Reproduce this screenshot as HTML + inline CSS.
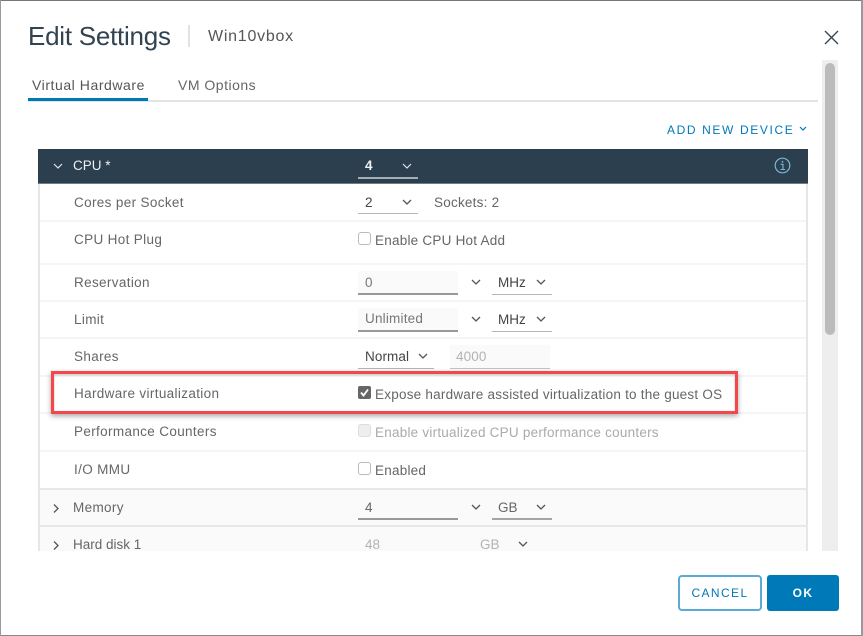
<!DOCTYPE html>
<html><head><meta charset="utf-8">
<style>
html,body{margin:0;padding:0;background:#fff}
#p{position:relative;width:863px;height:636px;overflow:hidden;background:#fff;font-family:"Liberation Sans",sans-serif;font-size:13.5px;color:#666}
#p div,#p span,#p svg{position:absolute}
.t{white-space:nowrap;line-height:16px}
.l{letter-spacing:.35px}
.r{letter-spacing:.23px}
.d{color:#444}
.c{fill:none;stroke:#555;stroke-width:1.3}
.cb{width:11px;height:11px;border:1px solid #bbb;border-radius:3px;background:#fff}
</style></head><body><div id="p">
<div style="left:0;top:0;width:863px;height:1px;background:#777"></div>
<div style="left:0;top:635px;width:863px;height:1px;background:#888"></div>
<div style="left:0;top:0;width:1px;height:636px;background:#999"></div>
<div style="left:861px;top:0;width:2px;height:636px;background:#999"></div>

<span class="t" style="left:28px;top:21px;font-size:26px;line-height:30px;color:#314351;letter-spacing:-.25px">Edit Settings</span>
<div style="left:188px;top:25px;width:2px;height:22px;background:#e2e2e2"></div>
<span class="t" style="left:208px;top:28px;font-size:16px;line-height:18px;color:#565656;letter-spacing:.75px">Win10vbox</span>
<svg style="left:823px;top:29px" width="16" height="16"><path d="M2 2L15 15M15 2L2 15" stroke="#314351" stroke-width="1.3" fill="none"/></svg>

<div style="left:28px;top:100px;width:790px;height:2px;background:#e4e4e4"></div>
<div style="left:28px;top:98px;width:120px;height:3px;background:#0079b8"></div>
<span class="t" style="left:32px;top:77px;font-size:14px;color:#565656;letter-spacing:.56px">Virtual Hardware</span>
<span class="t" style="left:178px;top:77px;font-size:14px;color:#666;letter-spacing:.5px">VM Options</span>

<span class="t" style="left:667px;top:122px;font-size:12px;color:#0079b8;letter-spacing:1.62px">ADD NEW DEVICE</span>
<svg style="left:799px;top:126px" width="8" height="6"><path d="M1 1L4 4L7 1" fill="none" stroke="#0079b8" stroke-width="1.2"/></svg>

<!-- scrollbar -->
<div style="left:822px;top:60px;width:16px;height:491px;background:#eee"></div>
<div style="left:825px;top:63px;width:10px;height:272px;background:#bbb;border-radius:5px"></div>

<!-- table -->
<div style="left:38px;top:149px;width:770px;height:402px;overflow:hidden">
  <div style="left:0;top:0;width:2px;height:402px;background:#e6e6e6"></div>
  <div style="left:768px;top:0;width:2px;height:402px;background:#e6e6e6"></div>
  <div style="left:2px;top:341px;width:766px;height:61px;background:#fafafa"></div>
  <div style="left:2px;top:71px;width:766px;height:2px;background:#f5f5f5"></div>
  <div style="left:2px;top:114px;width:766px;height:2px;background:#f5f5f5"></div>
  <div style="left:2px;top:151px;width:766px;height:2px;background:#f5f5f5"></div>
  <div style="left:2px;top:188px;width:766px;height:2px;background:#f5f5f5"></div>
  <div style="left:2px;top:226px;width:766px;height:2px;background:#f5f5f5"></div>
  <div style="left:2px;top:263px;width:766px;height:2px;background:#f5f5f5"></div>
  <div style="left:2px;top:301px;width:766px;height:2px;background:#f5f5f5"></div>
  <div style="left:0;top:339px;width:770px;height:2px;background:#e8e8e8"></div>
  <div style="left:0;top:376px;width:770px;height:2px;background:#e8e8e8"></div>
  <div style="left:0;top:0;width:770px;height:35px;background:#2b3f4e;border-bottom:1px solid #6f7d87;box-sizing:border-box"></div>
</div>

<svg style="left:53px;top:163px" width="10" height="7"><path d="M1 1L5 5L9 1" fill="none" stroke="#dfe4e8" stroke-width="1.2"/></svg>
<span class="t" style="left:73px;top:158px;color:#eef1f3">CPU *</span>
<span class="t" style="left:365px;top:158px;color:#eef1f3;font-weight:bold">4</span>
<svg style="left:402px;top:163px" width="10" height="7"><path d="M1 1L5 5L9 1" fill="none" stroke="#dfe4e8" stroke-width="1.2"/></svg>
<div style="left:358px;top:177px;width:60px;height:2px;background:#a8adb1"></div>
<svg style="left:774px;top:157px" width="17" height="17"><circle cx="8.5" cy="8.5" r="7.3" fill="none" stroke="#7cb6d6" stroke-width="1.2"/><path d="M6.5 7.3H9V12.5M6.5 12.5H11" fill="none" stroke="#7cb6d6" stroke-width="1.1"/><circle cx="8.5" cy="4.8" r=".9" fill="#7cb6d6"/></svg>

<span class="t l" style="left:74px;top:195px">Cores per Socket</span>
<span class="t d" style="left:365px;top:195px">2</span>
<svg class="c" style="left:402px;top:199px" width="10" height="7"><path d="M1 1L5 5L9 1"/></svg>
<div style="left:358px;top:213px;width:60px;height:1px;background:#b5b5b5"></div>
<span class="t r" style="left:434px;top:195px">Sockets: 2</span>

<span class="t l" style="left:74px;top:232px">CPU Hot Plug</span>
<div class="cb" style="left:358px;top:232px"></div>
<span class="t r" style="left:375px;top:233px">Enable CPU Hot Add</span>

<span class="t l" style="left:74px;top:275px">Reservation</span>
<div style="left:358px;top:271px;width:100px;height:22px;background:#fafafa;border-bottom:2px solid #999"></div>
<span class="t" style="left:365px;top:275px;color:#777">0</span>
<svg class="c" style="left:471px;top:279px" width="10" height="7"><path d="M1 1L5 5L9 1"/></svg>
<span class="t d" style="left:498px;top:275px">MHz</span>
<svg class="c" style="left:536px;top:279px" width="10" height="7"><path d="M1 1L5 5L9 1"/></svg>
<div style="left:492px;top:294px;width:60px;height:1px;background:#b5b5b5"></div>

<span class="t l" style="left:74px;top:312px">Limit</span>
<div style="left:358px;top:308px;width:100px;height:22px;background:#fafafa;border-bottom:2px solid #999"></div>
<span class="t" style="left:365px;top:311px;color:#777;letter-spacing:.2px">Unlimited</span>
<svg class="c" style="left:471px;top:316px" width="10" height="7"><path d="M1 1L5 5L9 1"/></svg>
<span class="t d" style="left:498px;top:312px">MHz</span>
<svg class="c" style="left:536px;top:316px" width="10" height="7"><path d="M1 1L5 5L9 1"/></svg>
<div style="left:492px;top:331px;width:60px;height:1px;background:#b5b5b5"></div>

<span class="t l" style="left:74px;top:349px">Shares</span>
<span class="t d" style="left:365px;top:349px;letter-spacing:.1px">Normal</span>
<svg class="c" style="left:418px;top:353px" width="10" height="7"><path d="M1 1L5 5L9 1"/></svg>
<div style="left:358px;top:368px;width:76px;height:1px;background:#b5b5b5"></div>
<div style="left:450px;top:345px;width:100px;height:23px;background:#fafafa;border-bottom:1px solid #c4c4c4"></div>
<span class="t" style="left:456px;top:349px;color:#b3b3b3;letter-spacing:.1px">4000</span>

<span class="t l" style="left:74px;top:386px">Hardware virtualization</span>
<div style="left:358px;top:386px;width:13px;height:13px;background:#666;border-radius:2px"></div>
<svg style="left:358px;top:386px" width="13" height="13"><path d="M3 6.5L5.5 9.5L10 3.5" fill="none" stroke="#fff" stroke-width="1.8"/></svg>
<span class="t r" style="left:375px;top:387px">Expose hardware assisted virtualization to the guest OS</span>

<div style="left:51px;top:371px;width:681px;height:37px;border:3px solid #f4474c;box-shadow:0 2px 5px rgba(0,0,0,.35),inset 0 1px 2px rgba(0,0,0,.25)"></div>

<span class="t l" style="left:74px;top:424px">Performance Counters</span>
<div class="cb" style="left:358px;top:424px;background:#eee;border-color:#ddd"></div>
<span class="t r" style="left:375px;top:425px;color:#aaa">Enable virtualized CPU performance counters</span>

<span class="t l" style="left:74px;top:462px">I/O MMU</span>
<div class="cb" style="left:358px;top:462px"></div>
<span class="t r" style="left:375px;top:463px">Enabled</span>

<svg class="c" style="left:53px;top:503px" width="7" height="11"><path d="M1 1.5L5 5.5L1 9.5"/></svg>
<span class="t l" style="left:73px;top:500px">Memory</span>
<span class="t" style="left:365px;top:500px">4</span>
<div style="left:358px;top:518px;width:100px;height:2px;background:#999"></div>
<svg class="c" style="left:471px;top:504px" width="10" height="7"><path d="M1 1L5 5L9 1"/></svg>
<span class="t" style="left:498px;top:500px">GB</span>
<svg class="c" style="left:536px;top:504px" width="10" height="7"><path d="M1 1L5 5L9 1"/></svg>
<div style="left:492px;top:518px;width:60px;height:2px;background:#a5a5a5"></div>

<svg class="c" style="left:53px;top:540px" width="7" height="11"><path d="M1 1.5L5 5.5L1 9.5"/></svg>
<span class="t" style="left:73px;top:537px">Hard disk 1</span>
<span class="t" style="left:365px;top:537px;color:#b3b3b3">48</span>
<span class="t" style="left:480px;top:537px;color:#b3b3b3">GB</span>
<svg class="c" style="left:518px;top:541px" width="10" height="7"><path d="M1 1L5 5L9 1"/></svg>

<div style="left:678px;top:575px;width:84px;height:36px;box-sizing:border-box;border:2px solid #5aa9d6;border-radius:4px;background:#fff;text-align:center;font-size:12px;line-height:33px;color:#0079b8;letter-spacing:1.4px">CANCEL</div>
<div style="left:767px;top:575px;width:72px;height:36px;border-radius:3px;background:#0079b8;text-align:center;font-size:12px;line-height:37px;color:#fff;letter-spacing:1.4px;font-weight:bold">OK</div>
</div></body></html>
